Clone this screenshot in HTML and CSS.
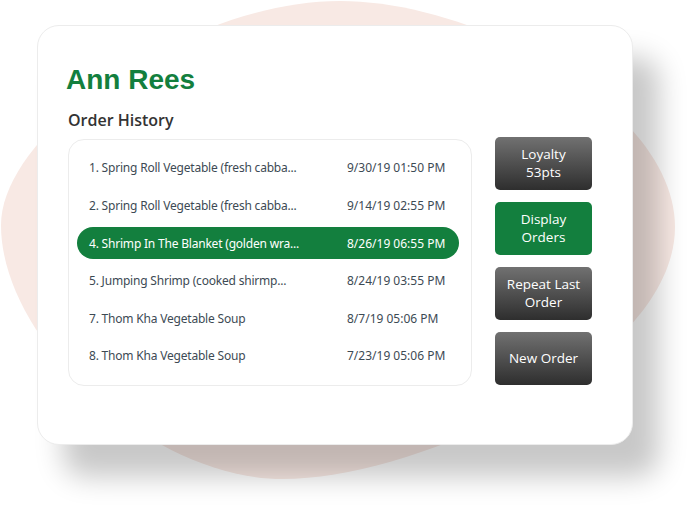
FILE: index.html
```html
<!DOCTYPE html>
<html>
<head>
<meta charset="utf-8">
<link rel="stylesheet" href="styles.css">
</head>
<body>
<div class="stage">
  <svg class="blob" width="698" height="510" viewBox="0 0 698 510">
    <path d="M340 1 C480 1 675 110 675 227 C675 360 420 479 283 479 C150 479 1 340 1 225 C1 130 190 1 340 1 Z" fill="#f8e9e4"/>
  </svg>
  <div class="card">
    <h1 class="name">Ann Rees</h1>
    <h2 class="section">Order History</h2>
    <div class="content">
      <div class="list">
        <div class="row"><span class="item">1. Spring Roll Vegetable (fresh cabba...</span><span class="date">9/30/19 01:50 PM</span></div>
        <div class="row"><span class="item">2. Spring Roll Vegetable (fresh cabba...</span><span class="date">9/14/19 02:55 PM</span></div>
        <div class="row selected"><span class="item">4. Shrimp In The Blanket (golden wra...</span><span class="date">8/26/19 06:55 PM</span></div>
        <div class="row"><span class="item">5. Jumping Shrimp (cooked shirmp...</span><span class="date">8/24/19 03:55 PM</span></div>
        <div class="row"><span class="item">7. Thom Kha Vegetable Soup</span><span class="date">8/7/19 05:06 PM</span></div>
        <div class="row"><span class="item">8. Thom Kha Vegetable Soup</span><span class="date">7/23/19 05:06 PM</span></div>
      </div>
      <div class="actions">
        <button class="btn"><span class="line">Loyalty</span><span class="line">53pts</span></button>
        <button class="btn green"><span class="line">Display</span><span class="line">Orders</span></button>
        <button class="btn"><span class="line">Repeat Last</span><span class="line">Order</span></button>
        <button class="btn"><span class="line">New Order</span></button>
      </div>
    </div>
  </div>
</div>
</body>
</html>
```
FILE: styles.css
```css
* { box-sizing: border-box; }
html, body { margin: 0; padding: 0; background: #fff; }
.stage {
  position: relative;
  width: 698px;
  height: 510px;
  overflow: hidden;
  padding: 25px 0 0 37px;
}
.blob { position: absolute; left: 0; top: 0; z-index: 0; }
.card {
  position: relative;
  z-index: 1;
  width: 596px;
  height: 420px;
  background: #fff;
  border: 1px solid #ececec;
  border-radius: 22px;
  box-shadow: 26px 32px 28px rgba(0,0,0,0.22);
  padding: 38px 0 0 28px;
}
.name {
  margin: 0;
  font-family: "Liberation Sans", Arial, sans-serif;
  font-weight: bold;
  font-size: 28px;
  line-height: 32px;
  color: #137f3e;
}
.section {
  margin: 13px 0 0 2px;
  font-family: "Open Sans", sans-serif;
  font-weight: 600;
  font-size: 16px;
  line-height: 22px;
  color: #333;
}
.content {
  display: flex;
  align-items: flex-start;
  margin-top: 6px;
  margin-left: 2px;
}
.list {
  width: 404px;
  height: 247px;
  border: 1px solid #ececec;
  border-radius: 16px;
  padding: 9px 12px 0 8px;
  margin-top: 2px;
}
.row {
  display: flex;
  align-items: center;
  height: 37.6px;
  padding-left: 12px;
  font-family: "Noto Sans", sans-serif;
  font-size: 12px;
  color: #3d4a54;
  white-space: nowrap;
}
.row.selected {
  background: #137f3e;
  color: #fff;
  border-radius: 16px;
  height: 32px;
  margin: 3px 0 2.6px;
}
.item { width: 258px; letter-spacing: -0.2px; }
.actions {
  display: flex;
  flex-direction: column;
  gap: 12px;
  margin-left: 23px;
}
.btn {
  width: 97px;
  height: 53px;
  border: none;
  border-radius: 5px;
  background: linear-gradient(#717171, #2e2e2e);
  color: #fff;
  font-family: "Open Sans", sans-serif;
  font-size: 13.5px;
  line-height: 18px;
  padding: 0 0 2px;
  display: flex;
  flex-direction: column;
  align-items: center;
  justify-content: center;
}
.line { display: block; }
.btn.green { background: #137f3e; }
```
